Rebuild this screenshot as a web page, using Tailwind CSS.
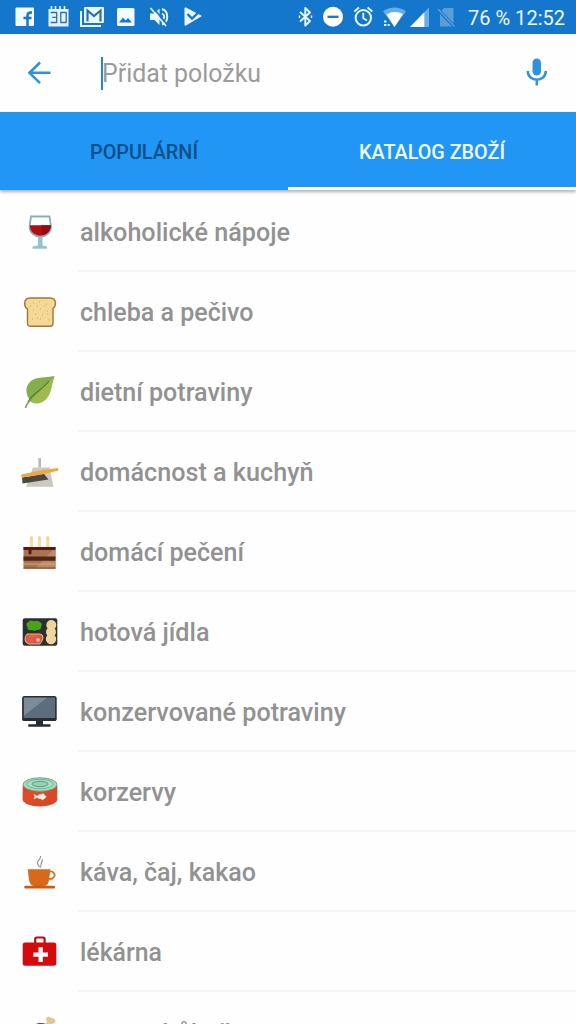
<!DOCTYPE html>
<html lang="cs">
<head>
<meta charset="utf-8">
<title>Přidat položku</title>
<script src="https://cdn.jsdelivr.net/npm/@tailwindcss/browser@4"></script>
</head>
<body class="bg-white">
<div class="flex h-[1024px] w-[576px] flex-col overflow-hidden bg-[#fefefe] font-['Roboto','Noto_Sans',sans-serif]">

  <!-- Status bar -->
  <header class="flex h-[34px] shrink-0 bg-[#1577cc] text-white">
    <svg class="h-[34px] w-[460px] shrink-0" viewBox="0 0 460 34" fill="none">
      <rect x="15.500" y="7.500" width="18.500" height="18.500" rx="1" fill="#f2fbff"/>
      <path d="M27.500 26v-8.500M32 12.500h-1c-2.300 0-3.500 1-3.500 3v2.500M23.500 18h8" stroke="#1577cc" stroke-width="2.500"/>
      <rect x="48.500" y="9" width="20" height="17.500" fill="#e6f5fd"/>
      <path d="M51.500 6v4M55.500 6v4M60 6v4M64.500 6v4" stroke="#e6f5fd" stroke-width="1.600"/>
      <path d="M50.700 12.500h6v10h-6M52.200 17.300h4.500M60.800 12.500h5.400v10h-5.400z" stroke="#2a70ac" stroke-width="1.300" stroke-linejoin="round"/>
      <path d="M81 11v15h20" stroke="#eaf7ff" stroke-width="2"/>
      <rect x="84" y="7" width="20" height="16" rx="1" fill="#eaf7ff"/>
      <path d="M87.500 21.500v-11l6.500 5.500 6.500-5.500v11" stroke="#2a70ac" stroke-width="2.200"/>
      <rect x="117" y="8" width="17.500" height="18" rx="1.500" fill="#f2fbff"/>
      <path d="M119 22.500l4-5 2.500 3 2.500-2.500 4 4.500z" fill="#1577cc"/>
      <path d="M150 13.500h4.500l5-5v16.500l-5-5H150z" fill="#eaf7ff"/>
      <path d="M162 9c7 2 7 13 0 15.500M162 13.500c3 1.500 3 5 0 6.500" stroke="#eaf7ff" stroke-width="1.900"/>
      <path d="M152.500 7l15 18" stroke="#1577cc" stroke-width="1.800"/>
      <path d="M150.500 8l15.500 18" stroke="#eaf7ff" stroke-width="1.700"/>
      <path d="M186 7.500l16 8.500-16 9.500q-1.500 .5-1.500-1V8.500q0-1.500 1.500-1z" fill="#eaf7ff"/>
      <path d="M187.500 14l4.500 4.500 8.500-8" stroke="#1577cc" stroke-width="2.400"/>
      <path d="M300 12l10 9-4.700 4.500V8l4.700 4.500L300 21.500" stroke="#eaf7ff" stroke-width="1.900" stroke-linejoin="round"/>
      <path d="M299.500 15.500v2.500M311.500 15.500v2.500" stroke="#eaf7ff" stroke-width="1.400"/>
      <circle cx="333" cy="16.800" r="10" fill="#fff"/>
      <path d="M327.500 16.800h11" stroke="#1577cc" stroke-width="2.300"/>
      <circle cx="363.300" cy="17.800" r="7.700" stroke="#e6f8ff" stroke-width="2"/>
      <path d="M363.300 12.800v5.400l3.700 2.300M354.300 11.500l4.700-4M372.300 11.500l-4.700-4" stroke="#e6f8ff" stroke-width="1.800"/>
      <path d="M383 11.300q11.500-7.500 23 0L394.500 27z" fill="#69aee3"/>
      <path d="M386.500 14.500q8-4.500 16.500-.5L394.500 27z" fill="#fff"/>
      <path d="M384 20.500h2.500v2H384zM384 24h2.500v2H384zM387.700 24h2v2h-2z" fill="#eaf7ff"/>
      <path d="M429 7.500V27h-19z" fill="#69aee3"/>
      <path d="M424.300 12.300V27H410z" fill="#fff"/>
      <path d="M444 8h9.500v15.500L441.500 10.500zM440 14l12 12.500h-12z" fill="#5b9dd6"/>
      <path d="M438 9l16.500 17.500" stroke="#5b9dd6" stroke-width="1.500"/>
    </svg>
    <div class="flex h-[35px] items-center whitespace-nowrap pl-[8px] text-[20px] leading-none text-[#eefaff]"><svg class="h-[35px] w-[97px]" viewBox="0 0 97 35"><text x="0" y="24.500" textLength="97" lengthAdjust="spacingAndGlyphs" fill="currentColor">76 % 12:52</text></svg></div>
  </header>

  <!-- Search bar -->
  <div class="flex h-[78px] shrink-0 items-center text-[#2f92e0]">
    <svg class="h-[78px] w-[101px]" viewBox="0 0 101 78" fill="none" stroke="#2f92de" stroke-width="2.600"><path d="M50.500 38.800H29.500M40 28.500L29.500 38.800 40 49.200"/></svg>
    <div class="h-[33px] w-[2px] bg-[#2188d9]"></div>
    <svg class="-ml-[2px] h-[78px] w-[400px]" viewBox="0 0 400 78"><text x="1" y="48" font-size="26" textLength="159" lengthAdjust="spacingAndGlyphs" fill="#9b9b9b">Přidat položku</text></svg>
    <svg class="h-[78px] w-[75px]" viewBox="501 34 75 78" fill="none"><rect x="532.500" y="58.500" width="8.500" height="17" rx="4.250" fill="#2f92e0"/><path d="M527.800 71c0 11.500 18 11.500 18 0M536.800 79.500v6" stroke="#2f92e0" stroke-width="2.500"/></svg>
  </div>

  <!-- Tabs -->
  <nav class="relative z-10 grid h-[78px] shrink-0 grid-cols-2 bg-[#2196f5] shadow-[0_2px_3px_rgba(0,0,0,0.3)]">
    <div><svg class="h-[78px] w-full" viewBox="0 0 288 78"><text x="90" y="47" font-size="20" font-weight="500" textLength="108" lengthAdjust="spacingAndGlyphs" fill="#0d4f87">POPULÁRNÍ</text></svg></div>
    <div class="border-b-[3px] border-white"><svg class="h-[75px] w-full" viewBox="0 0 288 75"><text x="71" y="47" font-size="20" font-weight="500" textLength="146" lengthAdjust="spacingAndGlyphs" fill="#f2fcff">KATALOG ZBOŽÍ</text></svg></div>
  </nav>

  <!-- Catalogue -->
  <main class="mt-[2px] flex flex-col text-[25px] font-medium text-[#929292]">
    <div class="flex h-20 shrink-0">
      <svg class="size-20" viewBox="0 0 80 80" fill="none">
        <path d="M31 24.500h18.500l1.500 10c0 6-5 10-10.800 10S29.500 40.500 29.500 34.500z" fill="#fff" stroke="#83b1c1" stroke-width="1.800"/>
        <path d="M30 33.300h20.700c.5 6-4.500 10.400-10.400 10.400S29.500 39.300 30 33.300z" fill="#b50c12"/><path d="M41 33.300h9.700c.5 5-3.700 9-8 10z" fill="#990a10"/>
        <path d="M38 45h4.500v8.500l4.500 1v2.200H32.500v-2.200l5.500-1z" fill="#93c3d3"/>
      </svg>
      <div class="-ml-[2px] flex-1 border-b-2 border-[#f4f4f4]"><svg class="h-[78px] w-full" viewBox="78 0 498 78"><text x="80" y="49" textLength="210" lengthAdjust="spacingAndGlyphs" fill="currentColor">alkoholické nápoje</text></svg></div>
    </div>
    <div class="flex h-20 shrink-0">
      <svg class="size-20" viewBox="0 0 80 80" fill="none">
        <path d="M30 26h20c4 0 5.500 2 5.500 5.500 0 2.500-1 4-2.500 5V51c0 2-1 3.300-3 3.300H30.500c-2 0-3-1.300-3-3.300V37c-2-1-2.800-3-2.800-5.500 0-3.500 1.800-5.500 5.300-5.500z" fill="#f6d896" stroke="#a8752f" stroke-width="1.400"/>
        <path d="M33 31h1m5-1h1m6 2h1M30 34h1m6 0h1m6 0h1m-12 4h1m6-1h1m6 2h1M35 42h1m6 1h1m4-1h1M32 47h1m7 0h1m7 1h1m-12-2h1" stroke="#c9a363" stroke-width="1.100"/>
      </svg>
      <div class="-ml-[2px] flex-1 border-b-2 border-[#f4f4f4]"><svg class="h-[78px] w-full" viewBox="78 0 498 78"><text x="80" y="49" textLength="173.500" lengthAdjust="spacingAndGlyphs" fill="currentColor">chleba a pečivo</text></svg></div>
    </div>
    <div class="flex h-20 shrink-0">
      <svg class="size-20" viewBox="0 0 80 80" fill="none">
        <path d="M54.500 24C51 33 52 44 43 49.500c-5 3-10 2-12.500-.5C25 42 25 34 31 29c6-4.500 15-3 23.500-5z" fill="#86ad4c"/>
        <path d="M54.500 24C51 33 52 44 43 49.500c-5 3-10 2-12.500-.5C36 42 46 34 54.500 24z" fill="#9dba4e"/>
        <path d="M49 29C42 38 32 42 28 50" stroke="#4f7d32" stroke-width="1.200"/><path d="M31 47.500c-3 3-4.800 5-5.500 8.500" stroke="#7c9b4e" stroke-width="1.600"/>
      </svg>
      <div class="-ml-[2px] flex-1 border-b-2 border-[#f4f4f4]"><svg class="h-[78px] w-full" viewBox="78 0 498 78"><text x="80" y="49" textLength="172.500" lengthAdjust="spacingAndGlyphs" fill="currentColor">dietní potraviny</text></svg></div>
    </div>
    <div class="flex h-20 shrink-0">
      <svg class="size-20" viewBox="0 0 80 80" fill="none">
        <path d="M38.300 26h2.700v9.500h-2.700z" fill="#bdb9b5"/><path d="M33 35.500h16.500l4 19.200H26z" fill="#ccc8c1"/>
        <path d="M22 45.500l22-3.500 4.500 5.500-26 4z" fill="#4a4843"/>
        <path d="M21.300 42.500l12-2.500q12-2.500 24.500-4 1.500 1.500 0 2.700L46 41.500q-12 2.500-24.700 4z" fill="#edaa3a"/>
      </svg>
      <div class="-ml-[2px] flex-1 border-b-2 border-[#f4f4f4]"><svg class="h-[78px] w-full" viewBox="78 0 498 78"><text x="80" y="49" textLength="233.500" lengthAdjust="spacingAndGlyphs" fill="currentColor">domácnost a kuchyň</text></svg></div>
    </div>
    <div class="flex h-20 shrink-0">
      <svg class="size-20" viewBox="0 0 80 80" fill="none">
        <path d="M31.500 25.500v9.500M39.500 25.500v9.500M47.800 25.500v9.500" stroke="#f5dfa0" stroke-width="3.200" stroke-linecap="round"/>
        <path d="M31.500 25v3M39.500 25v3M47.800 25v3" stroke="#ead17a" stroke-width="1.500"/>
        <path d="M23.500 35h32v21.700h-32z" fill="#a77552"/><path d="M55.500 35v21.700H35z" fill="#b98c63"/>
        <path d="M23.500 35h32v3h-24v3.500q-1.500 2-3 0V38h-5z" fill="#5b1712"/>
        <path d="M23.500 44.500h32v4.300h-32z" fill="#542415"/><path d="M23.500 52h32" stroke="#cfaa82"/><path d="M23.500 56h32" stroke="#7a4a30"/>
      </svg>
      <div class="-ml-[2px] flex-1 border-b-2 border-[#f4f4f4]"><svg class="h-[78px] w-full" viewBox="78 0 498 78"><text x="80" y="49" textLength="164" lengthAdjust="spacingAndGlyphs" fill="currentColor">domácí pečení</text></svg></div>
    </div>
    <div class="flex h-20 shrink-0">
      <svg class="size-20" viewBox="0 0 80 80" fill="none">
        <rect x="22.700" y="26.200" width="34.600" height="27.500" rx="2" fill="#2b3030"/>
        <path d="M28 30q3-2.500 6-.7 3-1.500 6 .7 3 2 1 5 0 3.500-4 3-3 1.500-5 0-5 1-4.500-3-2.500-3 .5-5z" fill="#48a31b"/>
        <circle cx="51.300" cy="33" r="5" fill="#f1d69c"/><circle cx="51" cy="40" r="5" fill="#f1d69c"/><circle cx="51" cy="47" r="5.200" fill="#f1d69c"/>
        <path d="M27 42h13q3 0 3 4l-1 3-2 3H29q-4-1-4-4.500t2-5.500z" fill="#dc5940" stroke="#f1b28d" stroke-width="1"/>
        <circle cx="38" cy="48" r="1.700" fill="#ffe1c7"/><path d="M29 45q4-2 7 0M28 48q3-1 5 1" stroke="#e56f51"/>
      </svg>
      <div class="-ml-[2px] flex-1 border-b-2 border-[#f4f4f4]"><svg class="h-[78px] w-full" viewBox="78 0 498 78"><text x="80" y="49" textLength="129.500" lengthAdjust="spacingAndGlyphs" fill="currentColor">hotová jídla</text></svg></div>
    </div>
    <div class="flex h-20 shrink-0">
      <svg class="size-20" viewBox="0 0 80 80" fill="none">
        <rect x="22.900" y="24.700" width="33" height="23.500" rx="1.500" fill="#5c6e7d" stroke="#282f33" stroke-width="1.600"/>
        <path d="M24 25.700h23L24 43.500z" fill="#7e8c99"/><path d="M22.500 46h33.800v1.500q0 1.500-1.500 1.500H24q-1.500 0-1.500-1.500z" fill="#282d30"/>
        <path d="M36 49h7v3.300h7.500v2.500H28.300v-2.500H36z" fill="#282d30"/>
      </svg>
      <div class="-ml-[2px] flex-1 border-b-2 border-[#f4f4f4]"><svg class="h-[78px] w-full" viewBox="78 0 498 78"><text x="80" y="49" textLength="266" lengthAdjust="spacingAndGlyphs" fill="currentColor">konzervované potraviny</text></svg></div>
    </div>
    <div class="flex h-20 shrink-0">
      <svg class="size-20" viewBox="0 0 80 80" fill="none">
        <path d="M22.700 33v15c3 8.500 31.500 8.500 34.600 0V33z" fill="#d94824"/><path d="M22.700 48c1 2.300 4 4 8 5L45 39H22.700z" fill="#e4532d" opacity=".45"/>
        <ellipse cx="40" cy="32.500" rx="17" ry="6.700" fill="#a6dfc1" stroke="#879c8b" stroke-width="1"/>
        <ellipse cx="40" cy="32" rx="13.500" ry="4.800" stroke="#6db997"/><ellipse cx="40" cy="32" rx="8" ry="2.700" fill="#92d1b0" stroke="#5ba481"/>
        <path d="M34 42.500l3 1.700q2.500-2 5-2l1.500-.5 1 1.500 1.700 1.500-2 2-1.700 1-1.500-1q-2.500 0-4-1.500l-3 1.700 1-2z" fill="#fff4ed" stroke="#fff4ed" stroke-width=".6"/>
      </svg>
      <div class="-ml-[2px] flex-1 border-b-2 border-[#f4f4f4]"><svg class="h-[78px] w-full" viewBox="78 0 498 78"><text x="80" y="49" textLength="96" lengthAdjust="spacingAndGlyphs" fill="currentColor">korzervy</text></svg></div>
    </div>
    <div class="flex h-20 shrink-0">
      <svg class="size-20" viewBox="0 0 80 80" fill="none">
        <path d="M40.500 24c1 3-3.500 4-3 7q0 2 2 4M42 27c1.500 2-1.500 4-1 6q.5 1.500-1 2.500" stroke="#8c8c8c" stroke-width="1.100"/>
        <path d="M27.700 37.300h22.800L49 48q-.5 5.500-5 6H34q-4-.5-5-6z" fill="#d96818"/>
        <path d="M50 39.500h2q5.500 3.500 0 7.300h-3" stroke="#d96818" stroke-width="1.700"/><rect x="24.300" y="53.700" width="30.700" height="2.700" rx="1" fill="#c65c18"/>
      </svg>
      <div class="-ml-[2px] flex-1 border-b-2 border-[#f4f4f4]"><svg class="h-[78px] w-full" viewBox="78 0 498 78"><text x="80" y="49" textLength="176" lengthAdjust="spacingAndGlyphs" fill="currentColor">káva, čaj, kakao</text></svg></div>
    </div>
    <div class="flex h-20 shrink-0">
      <svg class="size-20" viewBox="0 0 80 80" fill="none">
        <rect x="35.200" y="25.500" width="9.400" height="7" rx="1.500" stroke="#b20e17" stroke-width="2.200"/>
        <rect x="22.700" y="30.500" width="33.600" height="23.300" rx="2.500" fill="#d40a0c"/>
        <path d="M38.500 35.300h4.300v5.200H48v4.300h-5.200V50h-4.300v-5.200h-5.200v-4.300h5.200z" fill="#fff"/>
      </svg>
      <div class="-ml-[2px] flex-1 border-b-2 border-[#f4f4f4]"><svg class="h-[78px] w-full" viewBox="78 0 498 78"><text x="80" y="49" textLength="82" lengthAdjust="spacingAndGlyphs" fill="currentColor">lékárna</text></svg></div>
    </div>
    <div class="flex h-20 shrink-0">
      <svg class="size-20" viewBox="0 0 80 80" fill="none">
        <path d="M44 34l3-4q-2-3 0-5 2-1.500 3.500.7 4 0 5 3 0 3-5 3.500l-3 4z" fill="#dfc896"/><path d="M31 38q3-7 9-7t7 2v12H28z" fill="#783b34"/>
      </svg>
      <div class="-ml-[2px] flex-1"><svg class="h-[78px] w-full" viewBox="78 0 498 78"><text x="80" y="49.500" textLength="151" lengthAdjust="spacingAndGlyphs" fill="currentColor">maso, drůbež</text></svg></div>
    </div>
  </main>
</div>
</body>
</html>
